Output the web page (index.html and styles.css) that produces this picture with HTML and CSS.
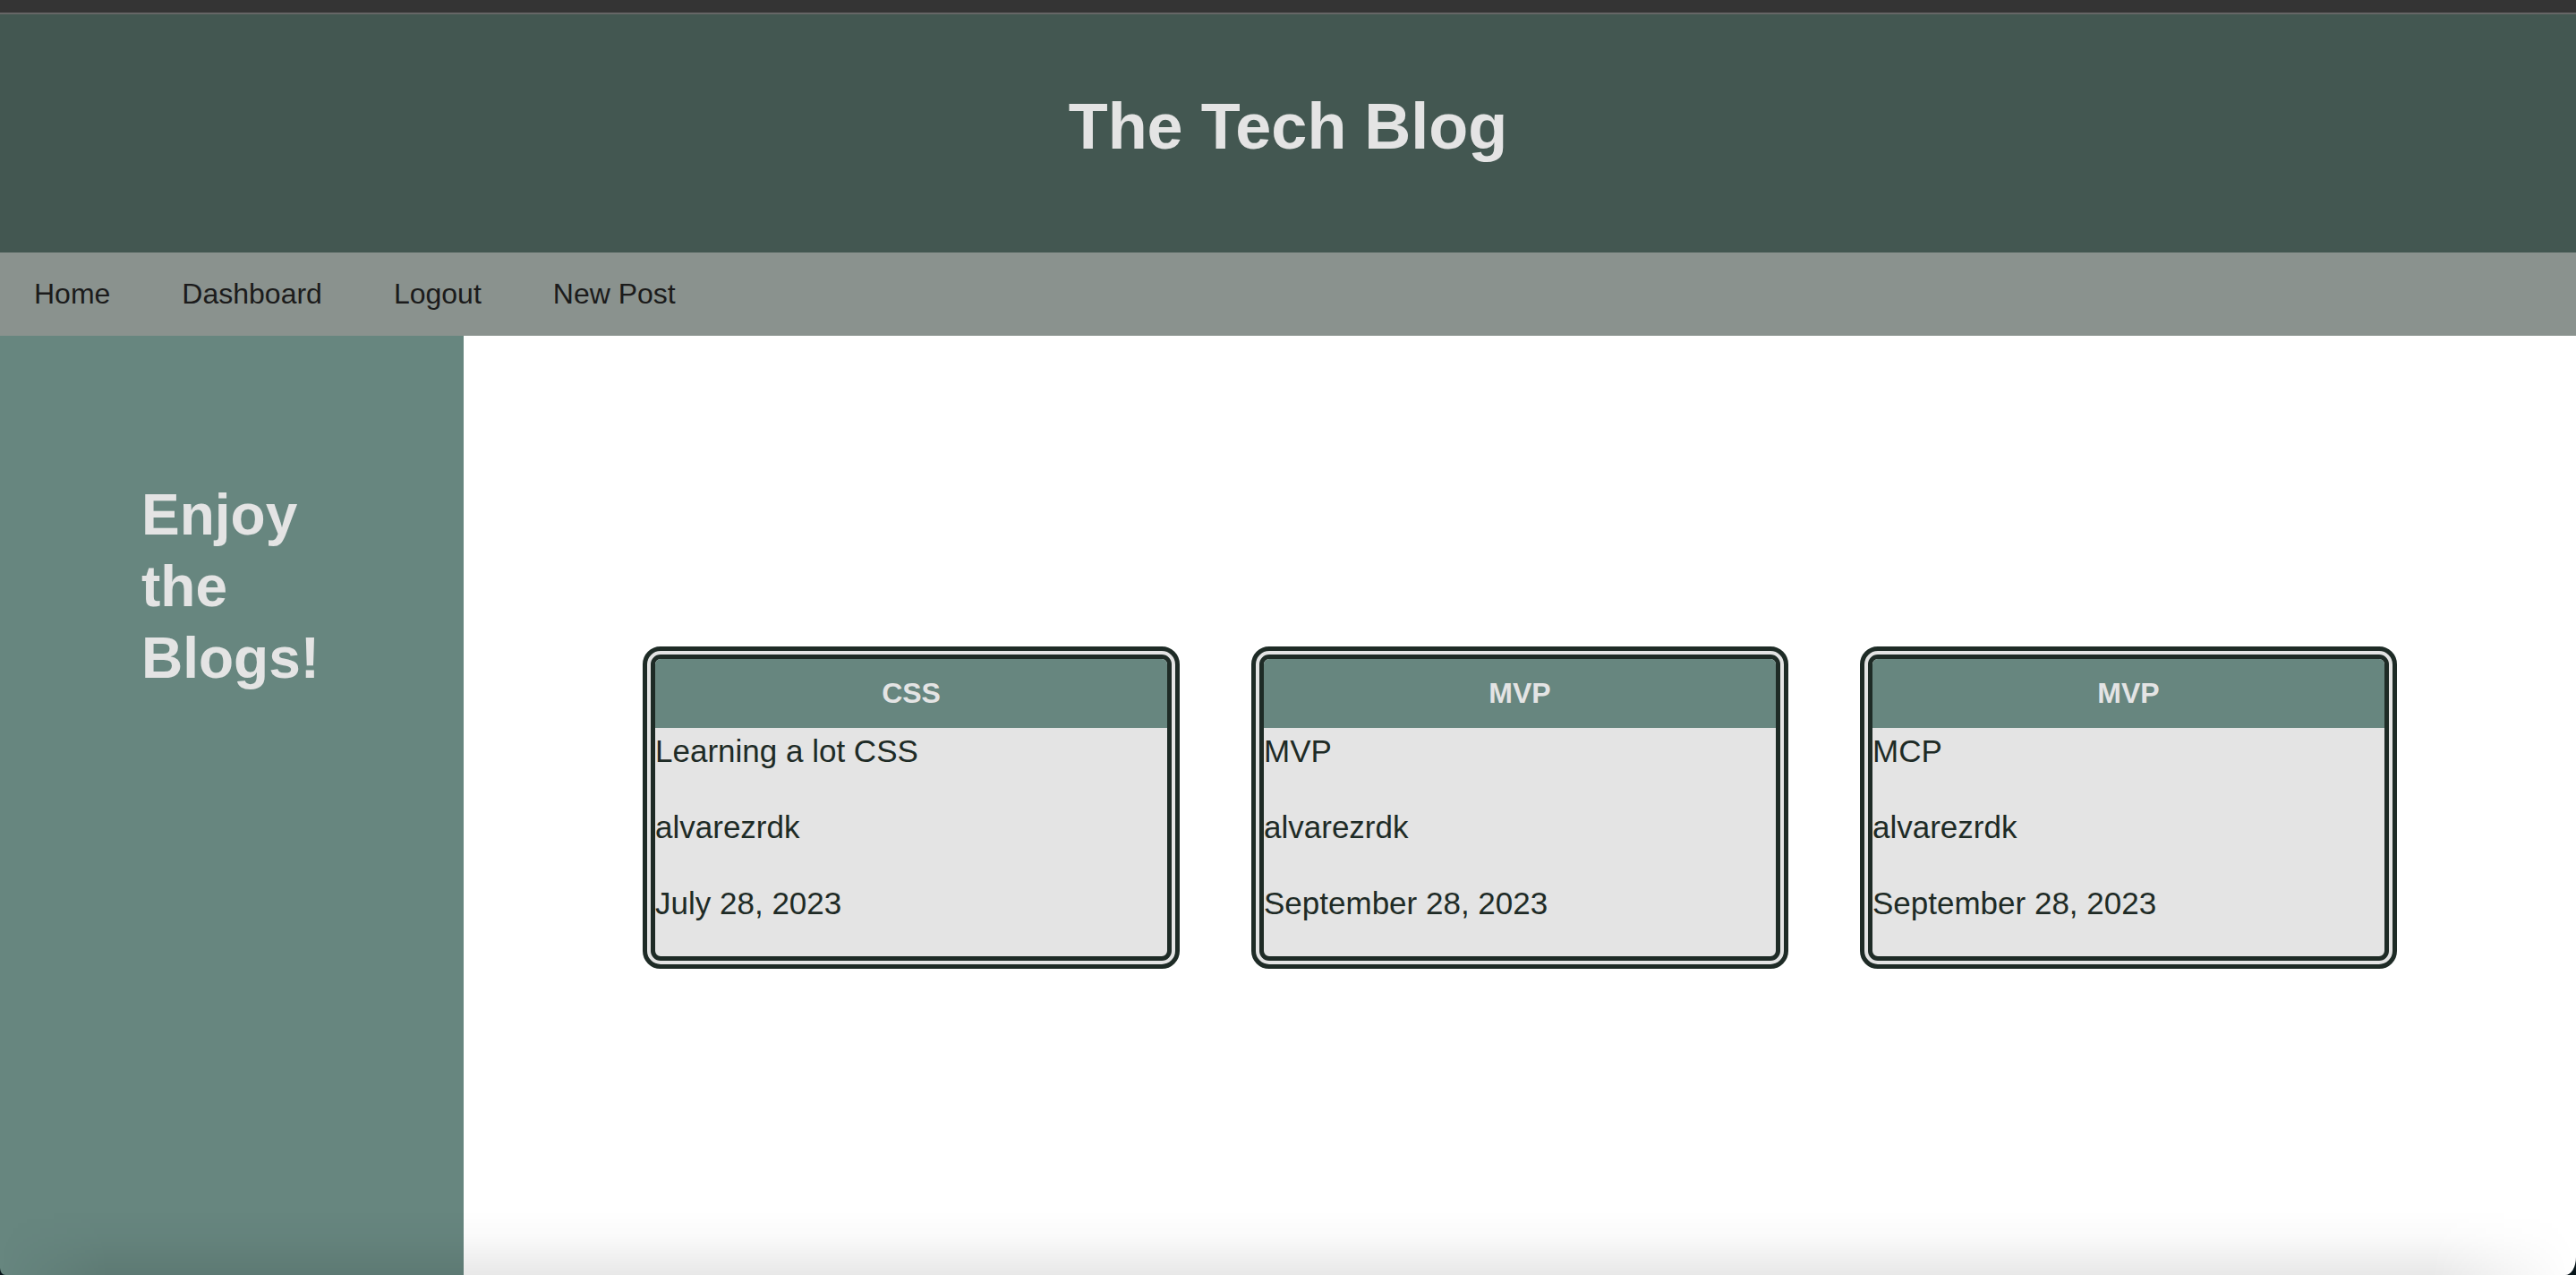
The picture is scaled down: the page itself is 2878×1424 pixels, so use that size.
FILE: index.html
```html
<!DOCTYPE html>
<html lang="en">
<head>
  <meta charset="utf-8">
  <meta name="viewport" content="width=device-width, initial-scale=1">
  <title>The Tech Blog</title>
  <link rel="stylesheet" href="styles.css">
</head>
<body>
  <div class="topbar"></div>
  <header class="header">
    <h1 class="header-title">The Tech Blog</h1>
  </header>
  <nav class="nav">
    <a class="nav-link" href="#home">Home</a>
    <a class="nav-link" href="#dashboard">Dashboard</a>
    <a class="nav-link" href="#logout">Logout</a>
    <a class="nav-link" href="#new-post">New Post</a>
  </nav>
  <div class="content">
    <aside class="sidebar">
      <h2 class="sidebar-title">Enjoy the Blogs!</h2>
    </aside>
    <main class="posts">
      <article class="card">
        <h3 class="card-title">CSS</h3>
        <p class="card-text">Learning a lot CSS</p>
        <p class="card-text">alvarezrdk</p>
        <p class="card-text">July 28, 2023</p>
      </article>
      <article class="card">
        <h3 class="card-title">MVP</h3>
        <p class="card-text">MVP</p>
        <p class="card-text">alvarezrdk</p>
        <p class="card-text">September 28, 2023</p>
      </article>
      <article class="card">
        <h3 class="card-title">MVP</h3>
        <p class="card-text">MCP</p>
        <p class="card-text">alvarezrdk</p>
        <p class="card-text">September 28, 2023</p>
      </article>
    </main>
  </div>
  <div class="window-shade"></div>
</body>
</html>
```
FILE: styles.css
```css
:root {
  --dark: #1e2b26;
  --green: #435751;
  --sage: #67867f;
  --gray: #8a928e;
  --light: #e4e4e4;
}

* {
  box-sizing: border-box;
  margin: 0;
  padding: 0;
}

body {
  display: flex;
  flex-direction: column;
  min-height: 100vh;
  background: #fff;
  color: var(--dark);
  font-family: Arial, "Liberation Sans", sans-serif;
}

.topbar {
  height: 16px;
  background: #343434;
  border-bottom: 2px solid #666;
}

.header {
  padding: 80px 40px 96px;
  background: var(--green);
  text-align: center;
}

.header-title {
  color: var(--light);
  font-size: 72px;
  line-height: 90px;
}

.nav {
  display: flex;
  gap: 80px;
  padding: 28px 38px;
  background: var(--gray);
}

.nav-link {
  color: #1b1b1b;
  font-size: 32px;
  line-height: 37px;
  text-decoration: none;
}

.content {
  display: flex;
  flex: 1;
}

.sidebar {
  flex: none;
  width: 18%;
  padding: 160px 158px;
  background: var(--sage);
}

.sidebar-title {
  color: var(--light);
  font-size: 64px;
  line-height: 80px;
}

.posts {
  display: grid;
  grid-template-columns: repeat(3, 1fr);
  gap: 80px;
  flex: 1;
  align-items: center;
  padding: 4px 200px 0;
}

.card {
  overflow: hidden;
  border: 14px double var(--dark);
  border-radius: 20px;
  background: var(--light);
}

.card-title {
  padding: 20px;
  background: var(--sage);
  color: var(--light);
  font-size: 32px;
  line-height: 37px;
  text-align: center;
}

.card-text {
  margin-bottom: 34px;
  font-size: 35px;
  line-height: 51px;
}

/* Soft shade and rounded corners along the bottom of the window */
.window-shade {
  position: fixed;
  inset: auto 0 0;
  height: 72px;
  overflow: hidden;
  pointer-events: none;
}

.window-shade::before {
  content: "";
  position: absolute;
  inset: 0;
  background: linear-gradient(to bottom, transparent, rgba(0, 0, 0, 0.02) 40%, rgba(0, 0, 0, 0.09));
  mask-image: linear-gradient(to right, transparent, #000 120px, #000 calc(100% - 160px), transparent);
}

.window-shade::after {
  content: "";
  position: absolute;
  inset: 0;
  border-radius: 0 0 12px 6px / 0 0 20px 8px;
  box-shadow: 0 0 0 20px #07151a;
  clip-path: inset(40px 0 0 0);
}
```
